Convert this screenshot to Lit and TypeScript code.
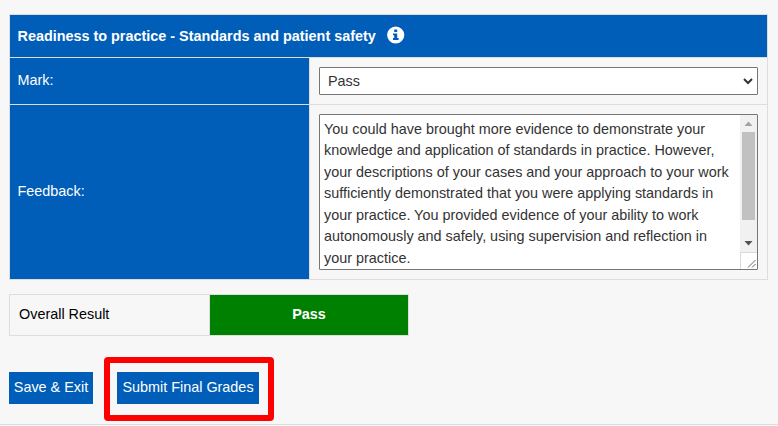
import { LitElement, html, css } from "lit";
import { customElement } from "lit/decorators.js";

const FEEDBACK = [
  "You could have brought more evidence to demonstrate your",
  "knowledge and application of standards in practice. However,",
  "your descriptions of your cases and your approach to your work",
  "sufficiently demonstrated that you were applying standards in",
  "your practice. You provided evidence of your ability to work",
  "autonomously and safely, using supervision and reflection in",
  "your practice.",
];

@customElement("feedback-box")
class FeedbackBox extends LitElement {
  static styles = css`
    :host { display: flex; box-sizing: border-box; height: 156px; border: 1px solid #767676; border-radius: 1px; background: #fff; overflow: hidden; }
    .text { flex: 1; padding: 3.5px 0 0 4px; font-size: 14.4px; line-height: 21.6px; white-space: nowrap; color: #333; }
    .bar { width: 17px; display: flex; flex-direction: column; background: #f1f1f1; }
    .bar svg { display: block; flex: none; }
    .thumb { height: 88px; margin: 0 2px; background: #c1c1c1; }
    .gap { flex: 1; }
    .corner { background: #fff; }
  `;
  render() {
    return html`
      <div class="text">${FEEDBACK.map((l) => html`<div>${l}</div>`)}</div>
      <div class="bar">
        <svg width="17" height="17"><path d="M4.5 11L8.5 6.5L12.5 11Z" fill="#a3a3a3" /></svg>
        <div class="thumb"></div>
        <div class="gap"></div>
        <svg width="17" height="17"><path d="M4.5 6L8.5 10.5L12.5 6Z" fill="#505050" /></svg>
        <svg class="corner" width="17" height="17">
          <path d="M0 .5H17M.5 0V17" stroke="#d9d9d9" />
          <path d="M8 15.5L15.5 8M12 15.5L15.5 12" stroke="#555" stroke-width=".9" />
        </svg>
      </div>
    `;
  }
}

@customElement("app-root")
class AppRoot extends LitElement {
  static styles = css`
    :host { display: block; box-sizing: border-box; height: 426px; padding: 14px 0 0 9px; background: #f7f7f7; font-family: "Liberation Sans", Arial, sans-serif; font-size: 14.4px; color: #000; overflow: hidden; }
    .marks { box-sizing: border-box; width: 759px; display: grid; grid-template-columns: 299px 457px; grid-template-rows: 42px 46px 174px; gap: 1px; padding: 1px; background: #ddd; }
    .head, .label { display: flex; align-items: center; padding-left: 7.5px; background: #005eb8; color: #fff; }
    .label { padding-bottom: 2px; }
    .head { grid-column: 1 / 3; font-weight: bold; }
    .info { margin: -3px 0 0 11px; }
    .field { background: #f7f7f7; padding: 9px; }
    .select { box-sizing: border-box; height: 28px; display: flex; align-items: center; justify-content: space-between; padding: 0 4px 0 8px; border: 1px solid #767676; border-radius: 1px; background: #fff; color: #333; }
    .result { box-sizing: border-box; width: 400px; margin-top: 14px; display: grid; grid-template-columns: 199px 198px; grid-template-rows: 40px; gap: 1px; padding: 1px; background: #ddd; }
    .name, .grade { display: flex; align-items: center; padding-bottom: 2px; }
    .name { padding-left: 9px; background: #f7f7f7; }
    .grade { justify-content: center; background: #008000; color: #fff; font-weight: bold; }
    .actions { display: flex; align-items: center; gap: 11px; margin-top: 21px; height: 64px; }
    .button { display: flex; align-items: center; justify-content: center; box-sizing: border-box; height: 32px; padding-bottom: 3px; background: #005eb8; color: #fff; white-space: nowrap; }
    .save { width: 84px; margin-bottom: 2px; }
    .submit { width: 142px; }
    .ring { box-sizing: border-box; width: 170px; height: 64px; border: 6px solid #f00; border-radius: 4px; padding: 9px 0 0 7px; }
    .rule { height: 1px; margin: 3px 0 0 -9px; background: #ddd; }
  `;
  render() {
    return html`
      <div class="marks">
        <div class="head">
          <span>Readiness to practice - Standards and patient safety</span>
          <svg class="info" width="18" height="18" viewBox="0 0 18 18">
            <circle cx="8.7" cy="9" r="8.6" fill="#fff" />
            <path d="M7.2 3.6H10.2V6.1H7.2ZM6 7.4H10.2V12H11.6V14H6V12H7.2V9.2H6Z" fill="#005eb8" />
          </svg>
        </div>
        <div class="label">Mark:</div>
        <div class="field">
          <div class="select">
            <span>Pass</span>
            <svg width="10" height="8" viewBox="0 0 10 8"><path d="M1 2L5 6L9 2" fill="none" stroke="#333" stroke-width="2" /></svg>
          </div>
        </div>
        <div class="label">Feedback:</div>
        <div class="field"><feedback-box></feedback-box></div>
      </div>
      <div class="result">
        <div class="name">Overall Result</div>
        <div class="grade">Pass</div>
      </div>
      <div class="actions">
        <div class="button save">Save &amp; Exit</div>
        <div class="ring"><div class="button submit">Submit Final Grades</div></div>
      </div>
      <div class="rule"></div>
    `;
  }
}
